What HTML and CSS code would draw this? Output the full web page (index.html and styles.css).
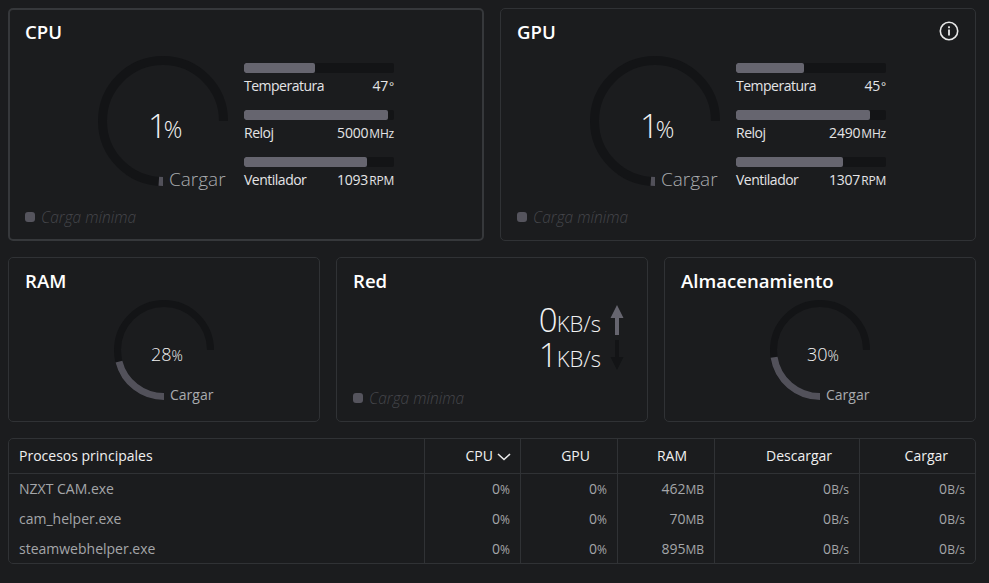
FILE: index.html
```html
<!DOCTYPE html>
<html lang="es">
<head>
<meta charset="utf-8">
<title>Monitor</title>
<link rel="stylesheet" href="styles.css">
</head>
<body>
<main class="page">
  <section class="row row-top">
    <article class="card card-active">
      <h2 class="title">CPU</h2>
      <div class="pane">
        <div class="gauge gauge-lg">
          <svg viewBox="0 0 130 130" class="ring"><path class="track" pathLength="100" d="M65 125.500A60.500 60.500 0 1 1 125.500 65"/><path class="value" pathLength="100" stroke-dasharray="1.500 100" d="M65 125.500A60.500 60.500 0 1 1 125.500 65"/></svg>
          <div class="read"><span class="num">1</span><span class="unit">%</span></div>
          <div class="load">Cargar</div>
        </div>
        <div class="stats">
          <div class="stat"><div class="bar"><div class="fill" style="width:47%"></div></div><div class="line"><span class="k">Temperatura</span><span class="v">47<small>°</small></span></div></div>
          <div class="stat"><div class="bar"><div class="fill" style="width:96%"></div></div><div class="line"><span class="k">Reloj</span><span class="v">5000<small>MHz</small></span></div></div>
          <div class="stat"><div class="bar"><div class="fill" style="width:82%"></div></div><div class="line"><span class="k">Ventilador</span><span class="v">1093<small>RPM</small></span></div></div>
        </div>
      </div>
      <div class="min"><i class="dot"></i><em>Carga mínima</em></div>
    </article>
    <article class="card">
      <h2 class="title">GPU</h2>
      <svg class="info" viewBox="0 0 20 20"><circle cx="10" cy="10" r="8.700" fill="none" stroke="#e8e8e8" stroke-width="1.600"/><rect x="9.100" y="8.500" width="1.800" height="6" fill="#e8e8e8"/><rect x="9.100" y="5.300" width="1.800" height="1.900" fill="#e8e8e8"/></svg>
      <div class="pane">
        <div class="gauge gauge-lg">
          <svg viewBox="0 0 130 130" class="ring"><path class="track" pathLength="100" d="M65 125.500A60.500 60.500 0 1 1 125.500 65"/><path class="value" pathLength="100" stroke-dasharray="1.500 100" d="M65 125.500A60.500 60.500 0 1 1 125.500 65"/></svg>
          <div class="read"><span class="num">1</span><span class="unit">%</span></div>
          <div class="load">Cargar</div>
        </div>
        <div class="stats">
          <div class="stat"><div class="bar"><div class="fill" style="width:45%"></div></div><div class="line"><span class="k">Temperatura</span><span class="v">45<small>°</small></span></div></div>
          <div class="stat"><div class="bar"><div class="fill" style="width:89%"></div></div><div class="line"><span class="k">Reloj</span><span class="v">2490<small>MHz</small></span></div></div>
          <div class="stat"><div class="bar"><div class="fill" style="width:71%"></div></div><div class="line"><span class="k">Ventilador</span><span class="v">1307<small>RPM</small></span></div></div>
        </div>
      </div>
      <div class="min"><i class="dot"></i><em>Carga mínima</em></div>
    </article>
  </section>

  <section class="row row-mid">
    <article class="card">
      <h2 class="title">RAM</h2>
      <div class="pane pane-mid">
        <div class="gauge gauge-sm">
          <svg viewBox="0 0 100 100" class="ring ring-sm"><path class="track" pathLength="100" d="M50 96.500A46.500 46.500 0 1 1 96.500 50"/><path class="value" pathLength="100" stroke-dasharray="28 100" d="M50 96.500A46.500 46.500 0 1 1 96.500 50"/></svg>
          <div class="read read-sm"><span class="num">28</span><span class="unit">%</span></div>
          <div class="load load-sm">Cargar</div>
        </div>
      </div>
    </article>
    <article class="card card-net">
      <h2 class="title">Red</h2>
      <div class="net">
        <div class="net-line"><span class="net-num">0</span><span class="net-unit">KB/s</span>
          <svg class="arrow" viewBox="0 0 14 30"><path class="arrow-up" d="M7 0L13.500 13H9V30H5V13H.5Z"/></svg></div>
        <div class="net-line"><span class="net-num">1</span><span class="net-unit">KB/s</span>
          <svg class="arrow" viewBox="0 0 14 30"><path class="arrow-down" d="M7 30L13.500 17H9V0H5V17H.5Z"/></svg></div>
      </div>
      <div class="min"><i class="dot"></i><em>Carga mínima</em></div>
    </article>
    <article class="card">
      <h2 class="title">Almacenamiento</h2>
      <div class="pane pane-mid">
        <div class="gauge gauge-sm">
          <svg viewBox="0 0 100 100" class="ring ring-sm"><path class="track" pathLength="100" d="M50 96.500A46.500 46.500 0 1 1 96.500 50"/><path class="value" pathLength="100" stroke-dasharray="30 100" d="M50 96.500A46.500 46.500 0 1 1 96.500 50"/></svg>
          <div class="read read-sm"><span class="num">30</span><span class="unit">%</span></div>
          <div class="load load-sm">Cargar</div>
        </div>
      </div>
    </article>
  </section>

  <section class="table-wrap">
    <table class="procs">
      <colgroup><col class="c-name"><col class="c-cpu"><col class="c-gpu"><col class="c-ram"><col class="c-down"><col class="c-up"></colgroup>
      <thead>
        <tr>
          <th class="name">Procesos principales</th>
          <th class="sorted">CPU<svg class="chev" viewBox="0 0 14 8"><path d="M1 1l6 5.500L13 1"/></svg></th>
          <th>GPU</th><th>RAM</th><th>Descargar</th><th>Cargar</th>
        </tr>
      </thead>
      <tbody>
        <tr><td class="name">NZXT CAM.exe</td><td>0<small>%</small></td><td>0<small>%</small></td><td>462<small>MB</small></td><td>0<small>B/s</small></td><td>0<small>B/s</small></td></tr>
        <tr><td class="name">cam_helper.exe</td><td>0<small>%</small></td><td>0<small>%</small></td><td>70<small>MB</small></td><td>0<small>B/s</small></td><td>0<small>B/s</small></td></tr>
        <tr><td class="name">steamwebhelper.exe</td><td>0<small>%</small></td><td>0<small>%</small></td><td>895<small>MB</small></td><td>0<small>B/s</small></td><td>0<small>B/s</small></td></tr>
      </tbody>
    </table>
  </section>
</main>
</body>
</html>
```
FILE: styles.css
```css
* { box-sizing: border-box; }
html, body { margin: 0; height: 100%; }
body {
  background: #1b1c1e;
  color: #e4e4e6;
  font-family: "Open Sans", "Noto Sans", "Liberation Sans", sans-serif;
  font-size: 14px;
  overflow: hidden;
}
.page { display: flex; flex-direction: column; gap: 16px; padding: 8px 13px 0 8px; }
.row { display: grid; gap: 16px; }
.row-top { grid-template-columns: 1fr 1fr; height: 233px; }
.row-mid { grid-template-columns: 1fr 1fr 1fr; height: 165px; }
.card {
  position: relative;
  display: flex;
  flex-direction: column;
  border: 1px solid #303235;
  border-radius: 5px;
  padding: 10px 16px 13px;
}
.card-active { border: 2px solid #36383b; padding: 9px 15px 12px; }
.title { margin: 0; font-size: 18.600px; line-height: 25px; font-weight: 600; color: #fff; }
.info { position: absolute; top: 12px; right: 16px; width: 20px; height: 20px; }
.pane { display: flex; justify-content: center; gap: 16px; margin-top: 12px; flex: 1; }
.pane-mid { margin-top: 0; }
.gauge { position: relative; flex: none; }
.gauge-lg { width: 130px; height: 130px; }
.gauge-sm { width: 100px; height: 100px; margin-top: 7px; }
.ring { display: block; width: 100%; height: 100%; fill: none; stroke-width: 9; }
.ring-sm { stroke-width: 7; }
.track { stroke: #131416; }
.value { stroke: #52515a; }
.read { position: absolute; left: 50px; top: 48px; display: flex; align-items: baseline; font-weight: 300; color: #f2f2f2; }
.read .num { font-size: 33px; line-height: 44px; letter-spacing: -3px; }
.read .unit { font-size: 23px; }
.read-sm { left: 37px; top: 41px; }
.read-sm .num { font-size: 18px; line-height: 26px; letter-spacing: 0; }
.read-sm .unit { font-size: 14px; }
.load { position: absolute; left: 71px; top: 110px; font-size: 19px; font-weight: 300; line-height: 26px; color: #a9abae; }
.load-sm { left: 56px; top: 85px; font-size: 14px; font-weight: 400; line-height: 20px; }
.stats { width: 150px; display: flex; flex-direction: column; gap: 9px; margin-top: 7px; }
.stat { height: 38px; }
.bar { height: 10px; border-radius: 2px; background: #131416; overflow: hidden; }
.fill { height: 100%; background: #66656f; border-radius: 2px; }
.line { display: flex; justify-content: space-between; align-items: baseline; line-height: 20px; margin-top: 3px; }
.k { letter-spacing: -.5px; }
.v { letter-spacing: -.2px; }
small { font-size: 12px; margin-left: 1px; }
.min { display: flex; align-items: center; gap: 6px; color: #45464b; font-size: 15.500px; line-height: 20px; font-weight: 300; }
.dot { width: 10px; height: 10px; border-radius: 3px; background: #55545d; }
.net { width: 100%; margin-top: 9px; flex: 1; display: flex; flex-direction: column; align-items: flex-end; padding-right: 7px; }
.net-line { display: flex; align-items: baseline; height: 35px; font-weight: 300; color: #f2f2f2; }
.net-num { font-size: 33px; line-height: 35px; letter-spacing: -1px; }
.net-unit { font-size: 22px; }
.arrow { width: 14px; height: 30px; margin-left: 9px; align-self: center; }
.arrow-up { fill: #66656f; }
.arrow-down { fill: #131416; }
.table-wrap { border: 1px solid #303235; border-radius: 5px; overflow: hidden; height: 126px; }
.procs { width: 100%; height: 100%; border-collapse: separate; border-spacing: 0; table-layout: fixed; }
.c-name { width: 415px; }
.c-cpu { width: 96px; }
.c-gpu, .c-ram { width: 97px; }
.c-down { width: 145px; }
.procs th, .procs td { text-align: right; padding: 0 10px 2px 0; border-left: 1px solid #303235; }
.procs th { height: 35px; font-weight: 400; color: #f0f0f0; padding-right: 27px; border-bottom: 1px solid #303235; }
.procs td { height: 30px; color: #a4a6a9; }
.procs td small { font-size: 12px; margin-left: 0; }
.procs .name { text-align: left; padding-left: 10px; border-left: 0; }
.procs th.sorted { padding-right: 9px; }
.chev { width: 14px; height: 8px; margin-left: 4px; fill: none; stroke: #e8e8e8; stroke-width: 1.600; }
```
